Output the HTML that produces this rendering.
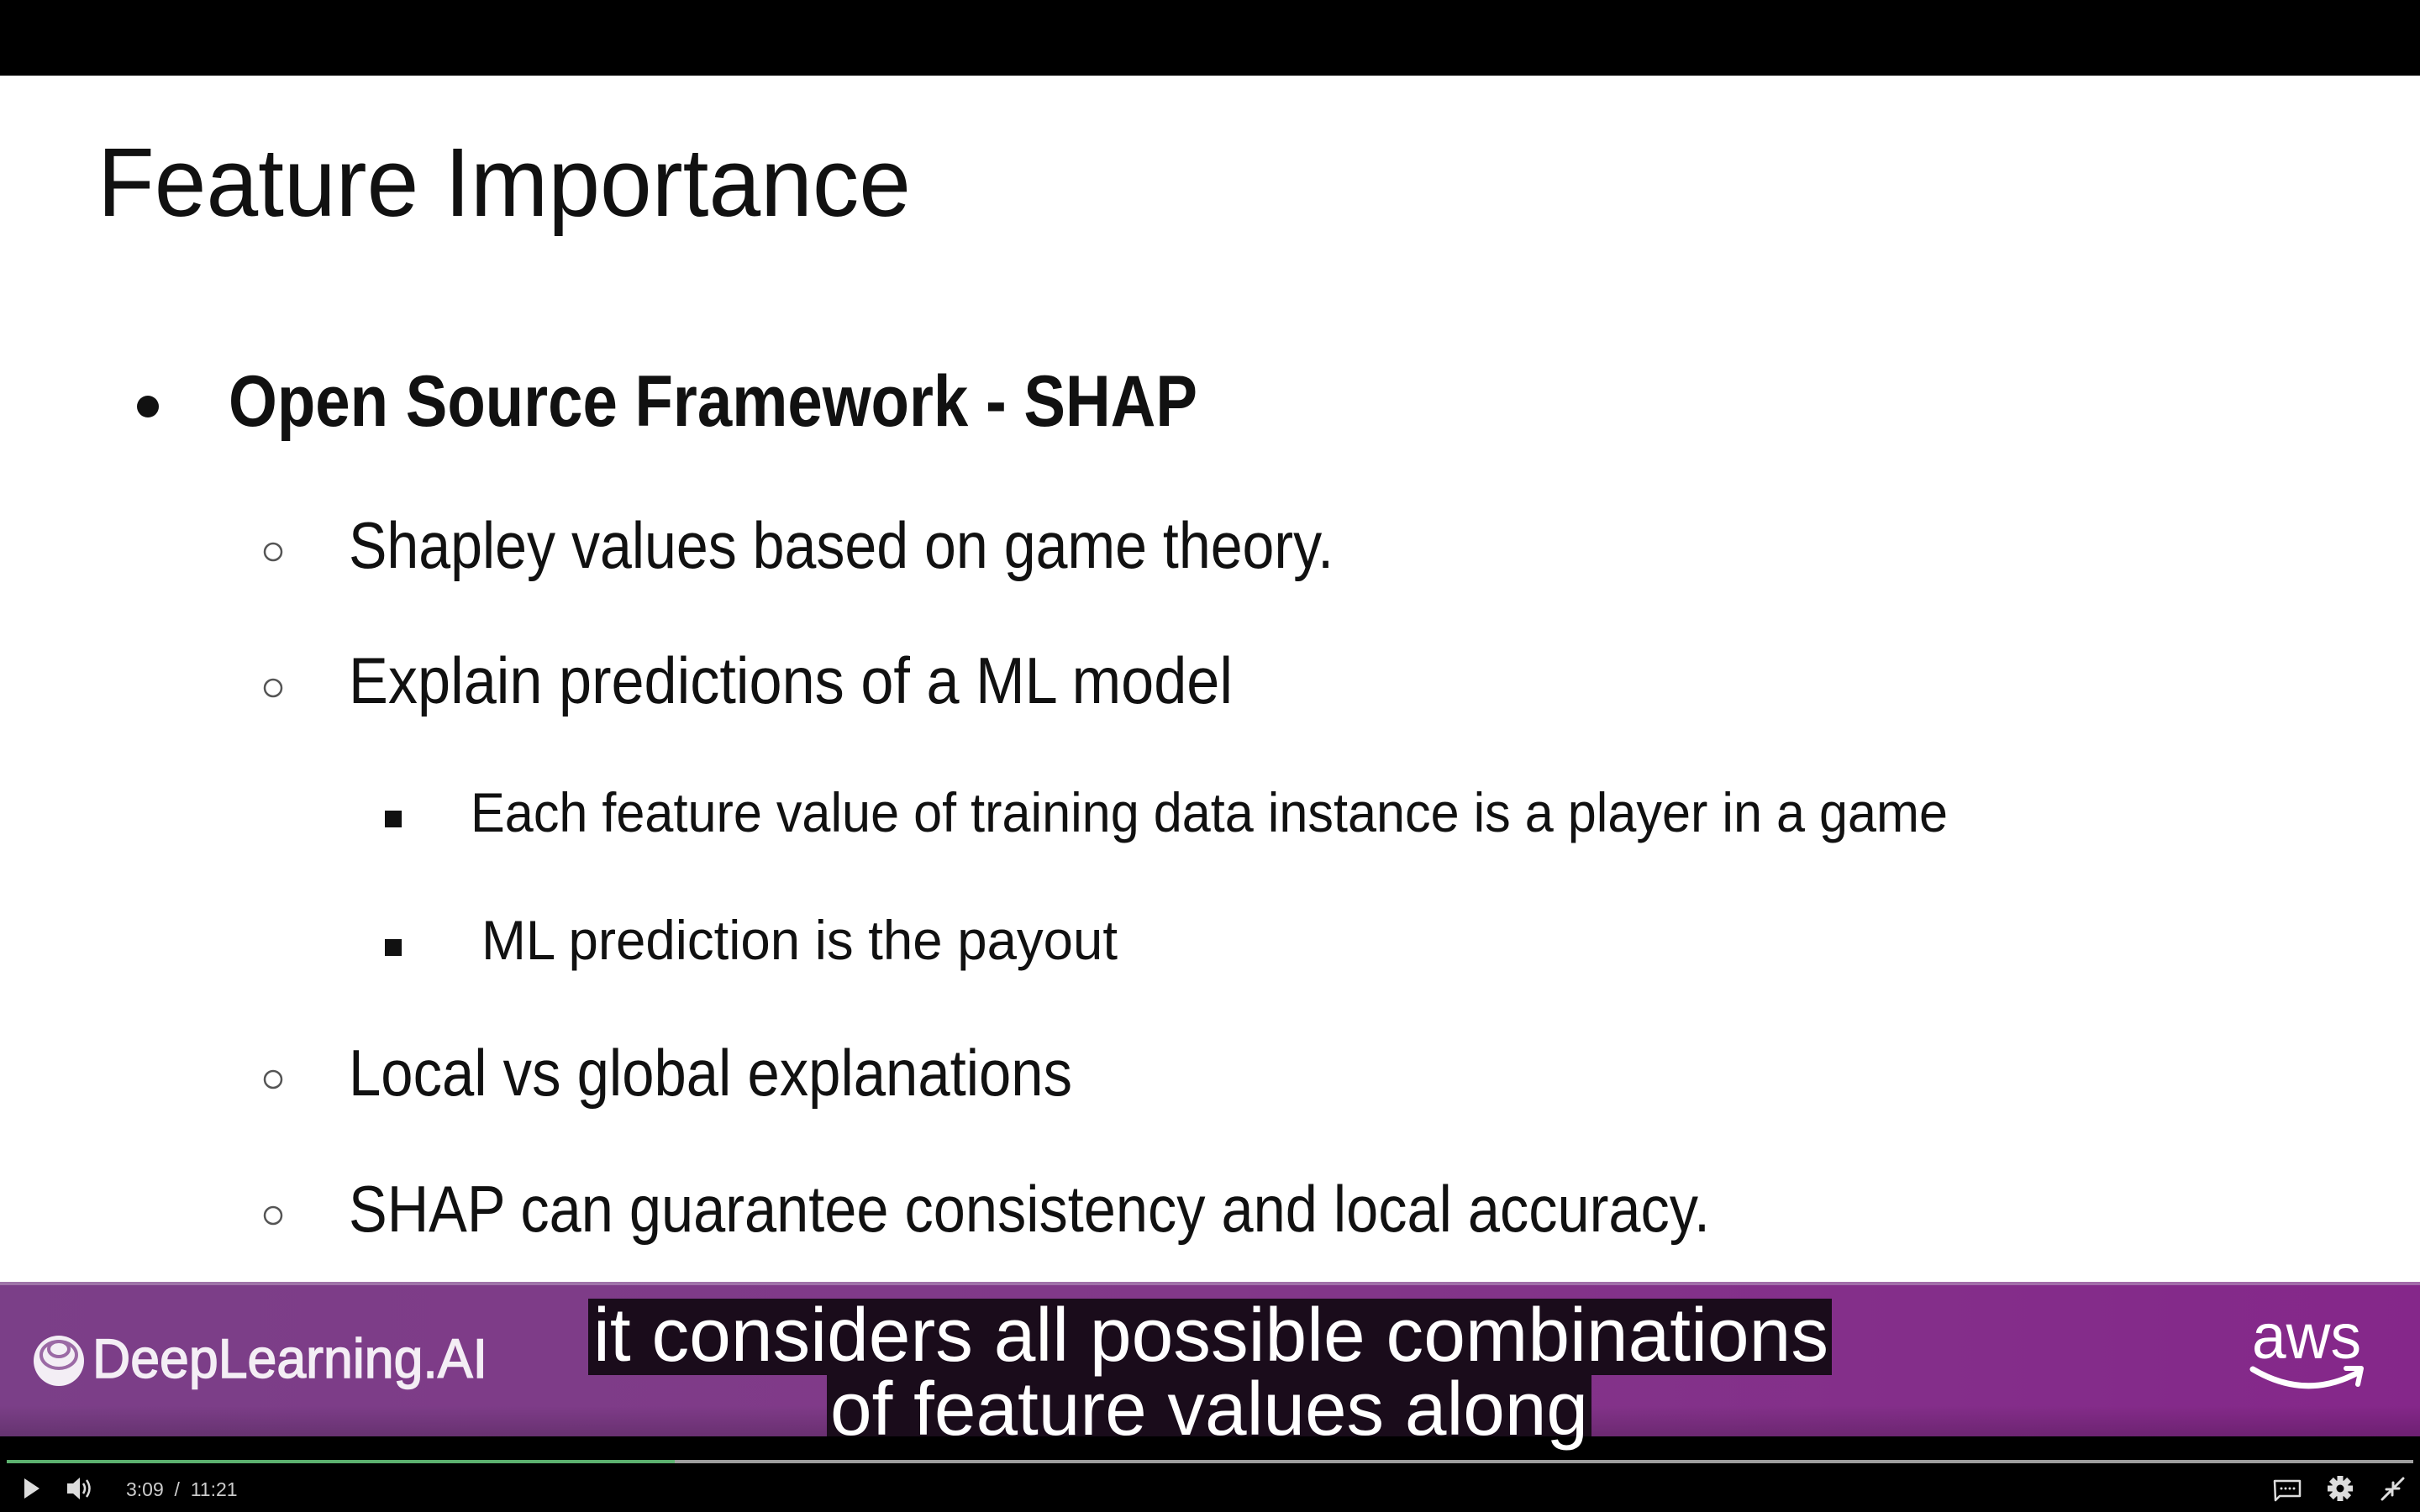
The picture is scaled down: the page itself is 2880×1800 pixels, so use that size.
<!DOCTYPE html>
<html><head><meta charset="utf-8"><style>
html,body{margin:0;padding:0;background:#000;width:2880px;height:1800px;overflow:hidden}
svg{display:block}
</style></head><body>
<svg width="2880" height="1800" viewBox="0 0 2880 1800" xmlns="http://www.w3.org/2000/svg">
<defs>
<linearGradient id="pg" x1="0" x2="1" y1="0" y2="0">
<stop offset="0" stop-color="#7b3f88"/><stop offset="0.5" stop-color="#823889"/><stop offset="1" stop-color="#85278a"/>
</linearGradient>
<linearGradient id="pv" x1="0" x2="0" y1="0" y2="1">
<stop offset="0" stop-color="#000" stop-opacity="0"/><stop offset="0.8" stop-color="#000" stop-opacity="0"/><stop offset="1" stop-color="#000" stop-opacity="0.18"/>
</linearGradient>
</defs>
<rect x="0" y="0" width="2880" height="1800" fill="#000"/>
<rect x="0" y="90" width="2880" height="1438" fill="#fff"/>
<g font-family="Liberation Sans, sans-serif" fill="#111">
<text x="116" y="257" font-size="116" textLength="968" lengthAdjust="spacingAndGlyphs">Feature Importance</text>
<circle cx="176" cy="484" r="13" fill="#111"/>
<text x="272" y="507" font-size="86" font-weight="bold" textLength="1153" lengthAdjust="spacingAndGlyphs">Open Source Framework - SHAP</text>
<g fill="none" stroke="#555" stroke-width="2.5">
<circle cx="325" cy="657" r="10"/><circle cx="325" cy="819" r="10"/><circle cx="325" cy="1285" r="10"/><circle cx="325" cy="1447" r="10"/>
</g>
<text x="415" y="676" font-size="78" textLength="1172" lengthAdjust="spacingAndGlyphs">Shapley values based on game theory.</text>
<text x="415" y="837" font-size="78" textLength="1052" lengthAdjust="spacingAndGlyphs">Explain predictions of a ML model</text>
<rect x="458" y="965" width="20" height="20" fill="#111"/>
<rect x="458" y="1118" width="20" height="20" fill="#111"/>
<text x="560" y="990" font-size="66" textLength="1758" lengthAdjust="spacingAndGlyphs">Each feature value of training data instance is a player in a game</text>
<text x="573" y="1142" font-size="66" textLength="757" lengthAdjust="spacingAndGlyphs">ML prediction is the payout</text>
<text x="415" y="1304" font-size="78" textLength="861" lengthAdjust="spacingAndGlyphs">Local vs global explanations</text>
<text x="415" y="1466" font-size="78" textLength="1620" lengthAdjust="spacingAndGlyphs">SHAP can guarantee consistency and local accuracy.</text>
</g>
<rect x="0" y="1526" width="2880" height="184" fill="url(#pg)"/>
<rect x="0" y="1526" width="2880" height="184" fill="url(#pv)"/>
<rect x="0" y="1526" width="2880" height="4" fill="#b89abf" opacity="0.6"/>
<g fill="none" stroke="#fff" stroke-width="6">
<circle cx="70" cy="1620" r="30" fill="#f3eef5" stroke="none"/>
<ellipse cx="70" cy="1613" rx="21" ry="16" stroke="#9b6aa5" stroke-width="4"/>
<ellipse cx="70" cy="1606" rx="12" ry="9" stroke="#9b6aa5" stroke-width="4"/>
</g>
<text x="110" y="1640" font-family="Liberation Sans, sans-serif" font-size="66" fill="#f4eef5" stroke="#f4eef5" stroke-width="1.5" textLength="470" lengthAdjust="spacingAndGlyphs">DeepLearning.AI</text>
<text x="2680" y="1617" font-family="Liberation Sans, sans-serif" font-size="76" fill="#fff" textLength="130" lengthAdjust="spacingAndGlyphs">aws</text>
<path d="M2681 1630 Q2745 1668 2808 1633" fill="none" stroke="#fff" stroke-width="7" stroke-linecap="round"/>
<path d="M2792 1629 L2810 1629 L2806 1648" fill="none" stroke="#fff" stroke-width="6" stroke-linecap="round" stroke-linejoin="round"/>
<rect x="700" y="1546" width="1480" height="91" fill="#1a0c1b"/>
<rect x="984" y="1637" width="910" height="73" fill="#1a0c1b"/>
<g font-family="Liberation Sans, sans-serif" font-size="90" fill="#fff">
<text x="706" y="1620" textLength="1470" lengthAdjust="spacingAndGlyphs">it considers all possible combinations</text>
<text x="988" y="1708" textLength="902" lengthAdjust="spacingAndGlyphs">of feature values along</text>
</g>
<rect x="8" y="1738" width="2864" height="4" fill="#9e9e9e"/>
<rect x="8" y="1738" width="795" height="4" fill="#5cb16f"/>
<path d="M29 1760 L47 1772 L29 1784 Z" fill="#ddd"/>
<path d="M80 1766 L87 1766 L95 1759 L95 1785 L87 1778 L80 1778 Z" fill="#ddd"/>
<path d="M99 1766 Q103 1772 99 1778 M103 1762 Q110 1772 103 1782" fill="none" stroke="#ddd" stroke-width="2.5"/>
<text x="150" y="1781" font-family="Liberation Sans, sans-serif" font-size="23" fill="#ccc" xml:space="preserve">3:09  /  11:21</text>
<path d="M2707 1763 L2737 1763 L2737 1781 L2713 1781 L2708 1786 Z" fill="none" stroke="#ddd" stroke-width="2.5" stroke-linejoin="round"/>
<g fill="#ddd"><circle cx="2715" cy="1772" r="1.5"/><circle cx="2720" cy="1772" r="1.5"/><circle cx="2725" cy="1772" r="1.5"/><circle cx="2730" cy="1772" r="1.5"/></g>
<g transform="translate(2785,1772)">
<circle r="10" fill="#ddd"/>
<g fill="#ddd"><rect x="-3.5" y="-15" width="7" height="30"/><rect x="-3.5" y="-15" width="7" height="30" transform="rotate(45)"/><rect x="-3.5" y="-15" width="7" height="30" transform="rotate(90)"/><rect x="-3.5" y="-15" width="7" height="30" transform="rotate(135)"/></g>
<circle r="4.5" fill="#000"/>
</g>
<path d="M2835 1785 L2846 1774 M2840 1773 L2847 1773 L2847 1780 M2860 1760 L2849 1771 M2855 1772 L2848 1772 L2848 1765" fill="none" stroke="#ddd" stroke-width="3" stroke-linecap="round"/>
</svg>
</body></html>
